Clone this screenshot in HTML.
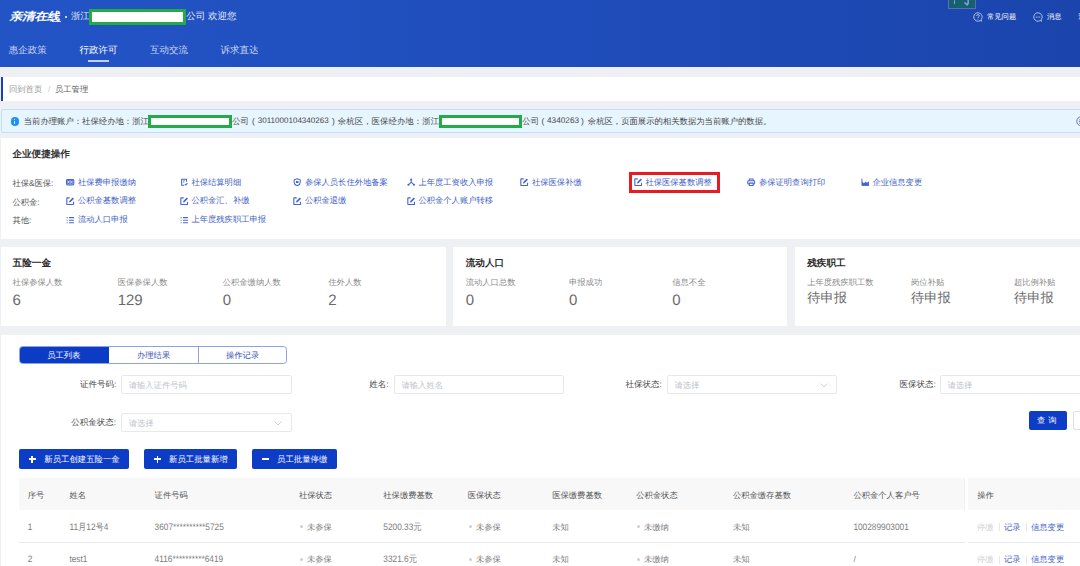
<!DOCTYPE html>
<html><head><meta charset="utf-8">
<style>
*{margin:0;padding:0;box-sizing:border-box}
html,body{width:1080px;height:566px;overflow:hidden;background:#eff0f4;font-family:"Liberation Sans",sans-serif;position:relative;text-rendering:geometricPrecision}
.a{position:absolute;white-space:nowrap;line-height:1}
#hdr{position:absolute;left:0;top:0;width:1080px;height:67px;background:linear-gradient(90deg,#2354c6 0%,#1f4dbb 50%,#1b45ad 100%)}
.w{color:#fff}
.nav{font-size:9.5px;color:rgba(255,255,255,.78);margin-top:1px}
.card{position:absolute;background:#fff}
.at{color:#474747}
.lbl{font-size:8.3px;color:#555}
.lnk{font-size:8.3px;color:#3f5fc6}
.ico{position:absolute;width:9px;height:9px}
.sl{font-size:8.3px;color:#8a8a8a}
.sv{font-size:15px;color:#6a6a6a;font-weight:300}
.st{font-size:9.6px;color:#2a2a2a;font-weight:600}
.inp{position:absolute;height:19px;border:1px solid #e6e8ec;border-radius:2px;background:#fff}
.ph{font-size:8.3px;color:#c0c4cc}
.fl{font-size:8.5px;color:#474747}
.btn{position:absolute;background:#0d3dc7;border-radius:2px;height:19.2px}
.th{font-size:8.3px;color:#555}
.td{font-size:8.3px;color:#7c7c7c}
.dg{transform:scaleY(1.13);transform-origin:0 60%}
</style></head><body>
<div id="hdr">
  <div class="a w" style="left:9px;top:9.6px;font-size:12.8px;font-weight:700;letter-spacing:-0.3px;transform:skewX(-14deg) scaleY(.86);transform-origin:0 100%">亲清在线</div><div class="a" style="left:52px;top:20.5px;width:9px;height:0.8px;background:rgba(255,255,255,.8)"></div>
  <div class="a" style="left:65px;top:16px;width:2.2px;height:2.2px;border-radius:50%;background:#fff"></div>
  <div class="a w" style="left:71px;top:11.8px;font-size:9.3px;opacity:.9">浙江</div>
  <div class="a" style="left:89px;top:9px;width:97px;height:16.4px;border:3px solid #22ab46;background:#fff"></div>
  <div class="a w" style="left:186.3px;top:11.8px;font-size:9.5px;opacity:.9">公司 欢迎您</div>
  <div class="a nav" style="left:8.75px;top:45px">惠企政策</div>
  <div class="a nav" style="left:79.4px;top:45px;color:#fff">行政许可</div>
  <div class="a nav" style="left:150px;top:45px">互动交流</div>
  <div class="a nav" style="left:220.6px;top:45px">诉求直达</div>
  <div class="a" style="left:88px;top:59.8px;width:20.8px;height:2.2px;background:rgba(255,255,255,.72)"></div>
  <div class="a" style="left:947.5px;top:-1px;width:28.5px;height:10px;background:#17616f;border:1px solid #5a6fae"></div><div class="a" style="left:953.5px;top:0;width:1.5px;height:3.5px;background:#8c9ee8;border-radius:1px"></div><svg class="a" style="left:962px;top:0" width="8" height="6" viewBox="0 0 8 6"><path d="M6.2 0V3.2L5.2 4.8 2.5 2.5" fill="none" stroke="#8c9ee8" stroke-width="1.5"/></svg>
  <svg class="a" style="left:972.5px;top:11.5px" width="10" height="10" viewBox="0 0 20 20" fill="none" stroke="rgba(255,255,255,.85)" stroke-width="1.5"><path d="M10 1.5a8.5 8.5 0 1 0 4.5 15.7L17 18.5l-.6-3A8.5 8.5 0 0 0 10 1.5z"/><path d="M7.5 7.8a2.5 2.5 0 1 1 3.5 2.2c-.8.4-1 .9-1 1.6v.6" stroke-width="1.6"/><circle cx="10" cy="14.5" r=".9" fill="#fff" stroke="none"/></svg>
  <div class="a w" style="left:987px;top:12.5px;font-size:7.3px;font-weight:500">常见问题</div>
  <svg class="a" style="left:1032.5px;top:11.5px" width="10" height="10" viewBox="0 0 20 20" fill="none" stroke="rgba(255,255,255,.85)" stroke-width="1.5"><path d="M10 1.5a8.5 8.5 0 1 0 4.5 15.7L17 18.5l-.6-3A8.5 8.5 0 0 0 10 1.5z"/><circle cx="6.5" cy="10" r="1" fill="#fff" stroke="none"/><circle cx="10" cy="10" r="1" fill="#fff" stroke="none"/><circle cx="13.5" cy="10" r="1" fill="#fff" stroke="none"/></svg>
  <div class="a w" style="left:1047px;top:12.5px;font-size:7.3px;font-weight:500">消息</div><div class="a w" style="left:1078.3px;top:12.5px;font-size:7.3px;font-weight:500">退出</div>
</div>

<!-- breadcrumb -->
<div class="card" style="left:1px;top:77px;width:1079px;height:24px">
  <div class="a" style="left:0;top:0;width:2px;height:24px;background:#1a3ec4"></div>
  <div class="a" style="left:8px;top:7.5px;font-size:8.3px;color:#999">回到首页</div>
  <div class="a" style="left:47px;top:7.5px;font-size:8.3px;color:#c8c8c8">/</div>
  <div class="a" style="left:54px;top:7.5px;font-size:8.3px;color:#606060">员工管理</div>
</div>

<!-- alert -->
<div class="a" style="left:1px;top:109px;width:1090px;height:23.5px;background:#e6f5fe;border:1px solid #bfe0f9;border-radius:2px"></div>
<div class="a" style="left:10.5px;top:117px;width:8.5px;height:8.5px;border-radius:50%;background:#1e90f5"></div><div class="a" style="left:14.3px;top:119px;width:1px;height:1px;background:#fff;opacity:.8"></div><div class="a" style="left:14.3px;top:120.5px;width:1px;height:3px;background:#fff;opacity:.8"></div>
<div class="a at" style="left:23.7px;top:116.8px;font-size:8.35px;letter-spacing:0px">当前办理账户：社保经办地：浙江</div>
<div class="a" style="left:148px;top:115px;width:83.5px;height:13px;border:3px solid #22ab46;background:#fff"></div>
<div class="a at" style="left:232.2px;top:116.8px;font-size:8.35px;letter-spacing:0px">公司</div><div class="a at" style="left:249.3px;top:116.8px;width:8px;text-align:center;font-size:8.35px">(</div><div class="a at" style="left:257.8px;top:116.8px;font-size:8.04px;letter-spacing:0px">3011000104340263</div><div class="a at" style="left:329.4px;top:116.8px;width:8px;text-align:center;font-size:8.35px">)</div><div class="a at" style="left:337.8px;top:116.8px;font-size:8.35px;letter-spacing:0.1px">余杭区，医保经办地：浙江</div>
<div class="a" style="left:439.2px;top:115px;width:82.5px;height:13px;border:3px solid #22ab46;background:#fff"></div>
<div class="a at" style="left:522.3px;top:116.8px;font-size:8.35px;letter-spacing:0px">公司</div><div class="a at" style="left:539px;top:116.8px;width:8px;text-align:center;font-size:8.35px">(</div><div class="a at" style="left:547px;top:116.8px;font-size:8.25px;letter-spacing:0px">4340263</div><div class="a at" style="left:578.5px;top:116.8px;width:8px;text-align:center;font-size:8.35px">)</div><div class="a at" style="left:587.8px;top:116.8px;font-size:8.35px;letter-spacing:0px">余杭区，页面展示的相关数据为当前账户的数据。</div>

<svg class="a" style="left:1075.5px;top:116px" width="11" height="11" viewBox="0 0 22 22" fill="none" stroke="#6b72cc" stroke-width="2"><circle cx="10.5" cy="10.5" r="9"/><path d="M6 8h9M6 11h9M6 14h9" stroke-width="1.6"/></svg>
<!-- actions card -->
<div class="card" style="left:1px;top:138px;width:1079px;height:101px"></div>
<div class="a st" style="left:12.4px;top:150px;font-size:9.6px;color:#333">企业便捷操作</div>
<div class="a lbl" style="left:12.4px;top:179px">社保&amp;医保:</div>
<div class="a lbl" style="left:12.4px;top:197.5px">公积金:</div>
<div class="a lbl" style="left:12.4px;top:216px">其他:</div>

<div class="a lnk" style="left:77.9px;top:177.6px">社保费申报缴纳</div>
<div class="a lnk" style="left:191.4px;top:177.6px">社保结算明细</div>
<div class="a lnk" style="left:304.9px;top:177.6px">参保人员长住外地备案</div>
<div class="a lnk" style="left:418.4px;top:177.6px">上年度工资收入申报</div>
<div class="a lnk" style="left:531.9px;top:177.6px">社保医保补缴</div>
<div class="a lnk" style="left:645.4px;top:177.6px">社保医保基数调整</div>
<div class="a lnk" style="left:758.9px;top:177.6px">参保证明查询打印</div>
<div class="a lnk" style="left:872.4px;top:177.6px">企业信息变更</div>
<div class="a" style="left:628.7px;top:171.6px;width:91.1px;height:21.1px;border:3px solid #ea1a22"></div>

<div class="a lnk" style="left:77.9px;top:196.1px">公积金基数调整</div>
<div class="a lnk" style="left:191.4px;top:196.1px">公积金汇、补缴</div>
<div class="a lnk" style="left:304.9px;top:196.1px">公积金退缴</div>
<div class="a lnk" style="left:418.4px;top:196.1px">公积金个人账户转移</div>

<div class="a lnk" style="left:77.9px;top:214.6px">流动人口申报</div>
<div class="a lnk" style="left:191.4px;top:214.6px">上年度残疾职工申报</div>

<svg class="a" style="left:66.4px;top:177.6px" width="8.4" height="8.4" viewBox="0 0 18 18" fill="none" stroke="#4565cc" stroke-width="2.2"><rect x="1.2" y="3.2" width="15.6" height="11.8" rx="2" fill="#b9c7f0"/><rect x="3.8" y="5.6" width="3.6" height="7" fill="#dfe6fa" stroke-width="1.3"/><rect x="10.6" y="5.6" width="3.6" height="7" fill="#dfe6fa" stroke-width="1.3"/></svg>
<svg class="a" style="left:179.9px;top:177.6px" width="8.4" height="8.4" viewBox="0 0 18 18" fill="none" stroke="#4565cc" stroke-width="2.2"><path d="M14 8V2.5H3.5v13H9"/><path d="M6 6h5M6 9h3" stroke-width="1.5"/><path d="M10.5 13l2 2 3.5-4"/></svg>
<svg class="a" style="left:293.4px;top:177.6px" width="8.4" height="8.4" viewBox="0 0 18 18" fill="none" stroke="#4565cc" stroke-width="2.2"><path d="M9 1.5L2.5 4v5c0 4 3 6.5 6.5 7.5 3.5-1 6.5-3.5 6.5-7.5V4z"/><rect x="6.3" y="6.5" width="5.4" height="4.2" fill="#4565cc" stroke="none"/></svg>
<svg class="a" style="left:406.9px;top:177.6px" width="8.4" height="8.4" viewBox="0 0 18 18" fill="none" stroke="#4565cc" stroke-width="2.2"><circle cx="9" cy="3.5" r="2.2" fill="#4565cc" stroke="none"/><circle cx="3" cy="14.5" r="2.2" fill="#4565cc" stroke="none"/><circle cx="15" cy="14.5" r="2.2" fill="#4565cc" stroke="none"/><path d="M9 4v5M9 9l-6 5.5M9 9l6 5.5"/></svg>
<svg class="a" style="left:520.4px;top:177.6px" width="8.4" height="8.4" viewBox="0 0 18 18" fill="none" stroke="#4565cc" stroke-width="2.2"><path d="M8 1.8H2.8a1 1 0 0 0-1 1v12.4a1 1 0 0 0 1 1h12.4a1 1 0 0 0 1-1V10" stroke-width="2.4"/><path d="M6.6 11.6l.5-3 7.4-7.4 2.5 2.5-7.4 7.4z" fill="#4565cc" stroke="none"/></svg>
<svg class="a" style="left:633.9px;top:177.6px" width="8.4" height="8.4" viewBox="0 0 18 18" fill="none" stroke="#4565cc" stroke-width="2.2"><path d="M8 1.8H2.8a1 1 0 0 0-1 1v12.4a1 1 0 0 0 1 1h12.4a1 1 0 0 0 1-1V10" stroke-width="2.4"/><path d="M6.6 11.6l.5-3 7.4-7.4 2.5 2.5-7.4 7.4z" fill="#4565cc" stroke="none"/></svg>
<svg class="a" style="left:747.4px;top:177.6px" width="8.4" height="8.4" viewBox="0 0 18 18" fill="none" stroke="#4565cc" stroke-width="2.2"><path d="M5 6V2h8v4"/><rect x="1.5" y="6" width="15" height="7" rx="2"/><path d="M5 11v5h8v-5z" fill="#fff"/></svg>
<svg class="a" style="left:860.9px;top:177.6px" width="8.4" height="8.4" viewBox="0 0 18 18" fill="none" stroke="#4565cc" stroke-width="2.2"><path d="M2 1.5V16h15" stroke-width="2"/><path d="M2 16V7l4 4 4-3 3 2 4-3v9z" fill="#4565cc" stroke="none"/></svg>
<svg class="a" style="left:66.4px;top:196.6px" width="8.4" height="8.4" viewBox="0 0 18 18" fill="none" stroke="#4565cc" stroke-width="2.2"><path d="M8 1.8H2.8a1 1 0 0 0-1 1v12.4a1 1 0 0 0 1 1h12.4a1 1 0 0 0 1-1V10" stroke-width="2.4"/><path d="M6.6 11.6l.5-3 7.4-7.4 2.5 2.5-7.4 7.4z" fill="#4565cc" stroke="none"/></svg>
<svg class="a" style="left:179.9px;top:196.6px" width="8.4" height="8.4" viewBox="0 0 18 18" fill="none" stroke="#4565cc" stroke-width="2.2"><path d="M8 1.8H2.8a1 1 0 0 0-1 1v12.4a1 1 0 0 0 1 1h12.4a1 1 0 0 0 1-1V10" stroke-width="2.4"/><path d="M6.6 11.6l.5-3 7.4-7.4 2.5 2.5-7.4 7.4z" fill="#4565cc" stroke="none"/></svg>
<svg class="a" style="left:293.4px;top:196.6px" width="8.4" height="8.4" viewBox="0 0 18 18" fill="none" stroke="#4565cc" stroke-width="2.2"><path d="M8 1.8H2.8a1 1 0 0 0-1 1v12.4a1 1 0 0 0 1 1h12.4a1 1 0 0 0 1-1V10" stroke-width="2.4"/><path d="M6.6 11.6l.5-3 7.4-7.4 2.5 2.5-7.4 7.4z" fill="#4565cc" stroke="none"/></svg>
<svg class="a" style="left:406.9px;top:196.6px" width="8.4" height="8.4" viewBox="0 0 18 18" fill="none" stroke="#4565cc" stroke-width="2.2"><path d="M8 1.8H2.8a1 1 0 0 0-1 1v12.4a1 1 0 0 0 1 1h12.4a1 1 0 0 0 1-1V10" stroke-width="2.4"/><path d="M6.6 11.6l.5-3 7.4-7.4 2.5 2.5-7.4 7.4z" fill="#4565cc" stroke="none"/></svg>
<svg class="a" style="left:66.4px;top:215.6px" width="8.4" height="8.4" viewBox="0 0 18 18" fill="none" stroke="#4565cc" stroke-width="2.2"><path d="M6.5 3.5H17M6.5 9H17M6.5 14.5H17"/><path d="M1.5 3.5h2M1.5 9h2M1.5 14.5h2"/></svg>
<svg class="a" style="left:179.9px;top:215.6px" width="8.4" height="8.4" viewBox="0 0 18 18" fill="none" stroke="#4565cc" stroke-width="2.2"><path d="M6.5 3.5H17M6.5 9H17M6.5 14.5H17"/><path d="M1.5 3.5h2M1.5 9h2M1.5 14.5h2"/></svg>
<!-- stat cards -->
<div class="card" style="left:1px;top:247px;width:445px;height:79px"></div>
<div class="card" style="left:453.3px;top:247px;width:334px;height:79px"></div>
<div class="card" style="left:795.3px;top:247px;width:290px;height:79px"></div>

<div class="a st" style="left:12.6px;top:258.5px">五险一金</div>
<div class="a sl" style="left:12.6px;top:278px">社保参保人数</div>
<div class="a sl" style="left:117.7px;top:278px">医保参保人数</div>
<div class="a sl" style="left:222.7px;top:278px">公积金缴纳人数</div>
<div class="a sl" style="left:328.3px;top:278px">住外人数</div>
<div class="a sv" style="left:12.6px;top:293px">6</div>
<div class="a sv" style="left:117.7px;top:293px">129</div>
<div class="a sv" style="left:222.7px;top:293px">0</div>
<div class="a sv" style="left:328.3px;top:293px">2</div>

<div class="a st" style="left:465.7px;top:258.5px">流动人口</div>
<div class="a sl" style="left:465.7px;top:278px">流动人口总数</div>
<div class="a sl" style="left:569px;top:278px">申报成功</div>
<div class="a sl" style="left:672.3px;top:278px">信息不全</div>
<div class="a sv" style="left:465.7px;top:293px">0</div>
<div class="a sv" style="left:569px;top:293px">0</div>
<div class="a sv" style="left:672.3px;top:293px">0</div>

<div class="a st" style="left:807.2px;top:258.5px">残疾职工</div>
<div class="a sl" style="left:807.2px;top:278px">上年度残疾职工数</div>
<div class="a sl" style="left:911px;top:278px">岗位补贴</div>
<div class="a sl" style="left:1013.9px;top:278px">超比例补贴</div>
<div class="a sv" style="left:807.2px;top:290.5px;font-size:13.3px">待申报</div>
<div class="a sv" style="left:911px;top:290.5px;font-size:13.3px">待申报</div>
<div class="a sv" style="left:1013.9px;top:290.5px;font-size:13.3px">待申报</div>

<!-- main card -->
<div class="card" style="left:1px;top:335px;width:1079px;height:240px"></div>
<!-- tabs -->
<div class="a" style="left:18.75px;top:346.3px;width:268.25px;height:17.9px;border:1px solid #8ea2e2;border-radius:3.5px;overflow:hidden;background:#fff">
  <div class="a" style="left:0;top:0;width:89.5px;height:100%;background:#0c3cc6"></div>
  <div class="a" style="left:178.5px;top:0;width:1px;height:100%;background:#8ea2e2"></div>
</div>
<div class="a" style="left:47.2px;top:350.5px;font-size:8.3px;color:#fff">员工列表</div>
<div class="a" style="left:137px;top:350.5px;font-size:8.3px;color:#3c50b4">办理结果</div>
<div class="a" style="left:226px;top:350.5px;font-size:8.3px;color:#3c50b4">操作记录</div>

<!-- form -->
<div class="a fl" style="left:80px;top:380px">证件号码:</div>
<div class="inp" style="left:121.3px;top:375.2px;width:170.4px"></div>
<div class="a ph" style="left:128.7px;top:380.5px">请输入证件号码</div>
<div class="a fl" style="left:369.2px;top:380px">姓名:</div>
<div class="inp" style="left:394.2px;top:375.2px;width:170.2px"></div>
<div class="a ph" style="left:401.5px;top:380.5px">请输入姓名</div>
<div class="a fl" style="left:625.6px;top:380px">社保状态:</div>
<div class="inp" style="left:667.2px;top:375.2px;width:170.3px"></div>
<div class="a ph" style="left:674.5px;top:380.5px">请选择</div><svg class="a" style="left:820px;top:382.5px" width="8" height="5" viewBox="0 0 8 5"><path d="M0.5 0.5L4 4L7.5 0.5" fill="none" stroke="#c0c4cc" stroke-width="0.8"/></svg>
<div class="a fl" style="left:899.4px;top:380px">医保状态:</div>
<div class="inp" style="left:940.2px;top:375.2px;width:170px"></div>
<div class="a ph" style="left:947.5px;top:380.5px">请选择</div>

<div class="a fl" style="left:71.3px;top:418px">公积金状态:</div>
<div class="inp" style="left:121.3px;top:413.4px;width:170.6px"></div>
<div class="a ph" style="left:128.7px;top:418.5px">请选择</div><svg class="a" style="left:274px;top:420.5px" width="8" height="5" viewBox="0 0 8 5"><path d="M0.5 0.5L4 4L7.5 0.5" fill="none" stroke="#c0c4cc" stroke-width="0.8"/></svg>

<div class="btn" style="left:1028.7px;top:410.9px;width:38px"></div>
<div class="a" style="left:1037px;top:416px;font-size:8.3px;color:#fff;font-weight:500;letter-spacing:3px">查询</div>
<div class="a" style="left:1073px;top:410.9px;width:20px;height:19.3px;border:1px solid #dcdfe6;border-radius:2px;background:#fff"></div>

<!-- buttons -->
<div class="btn" style="left:18.7px;top:449.4px;width:110.4px"></div>
<div class="btn" style="left:143.8px;top:449.4px;width:93.5px"></div>
<div class="btn" style="left:251.8px;top:449.4px;width:85px"></div>
<div class="a" style="left:28.7px;top:458.45px;width:7px;height:1.5px;background:#fff"></div><div class="a" style="left:31.45px;top:455.7px;width:1.5px;height:7px;background:#fff"></div>
<div class="a" style="left:44.3px;top:455px;font-size:8.4px;color:#fff">新员工创建五险一金</div>
<div class="a" style="left:153.8px;top:458.45px;width:7px;height:1.5px;background:#fff"></div><div class="a" style="left:156.55px;top:455.7px;width:1.5px;height:7px;background:#fff"></div>
<div class="a" style="left:169px;top:455px;font-size:8.4px;color:#fff">新员工批量新增</div>
<div class="a" style="left:261.8px;top:458.45px;width:7px;height:1.5px;background:#fff"></div>
<div class="a" style="left:277px;top:455px;font-size:8.4px;color:#fff">员工批量停缴</div>

<!-- table -->
<div class="a" style="left:18.5px;top:478.3px;width:1062px;height:32.2px;background:#f8f8f9"></div>
<div class="a" style="left:18.5px;top:542px;width:1062px;height:1px;background:#e9eaee"></div>
<div class="a" style="left:965px;top:478px;width:2.5px;height:33px;background:#fff"></div>
<div class="a" style="left:964px;top:478px;width:1px;height:33px;background:#f1f1f3"></div>
<div class="a" style="left:965px;top:542px;width:2.5px;height:1px;background:#fff"></div>

<div class="a th" style="left:27.8px;top:490.5px">序号</div>
<div class="a th" style="left:69.4px;top:490.5px">姓名</div>
<div class="a th" style="left:154.6px;top:490.5px">证件号码</div>
<div class="a th" style="left:298.9px;top:490.5px">社保状态</div>
<div class="a th" style="left:383.3px;top:490.5px">社保缴费基数</div>
<div class="a th" style="left:467.7px;top:490.5px">医保状态</div>
<div class="a th" style="left:552.2px;top:490.5px">医保缴费基数</div>
<div class="a th" style="left:636.2px;top:490.5px">公积金状态</div>
<div class="a th" style="left:732.9px;top:490.5px">公积金缴存基数</div>
<div class="a th" style="left:853.4px;top:490.5px">公积金个人客户号</div>
<div class="a th" style="left:977.2px;top:490.5px">操作</div>

<div class="a td dg" style="left:27.8px;top:522.5px">1</div>
<div class="a td dg" style="left:69.4px;top:522.5px">11月12号4</div>
<div class="a td dg" style="left:154.6px;top:522.5px">3607**********5725</div>
<div class="a td" style="left:300px;top:522.5px"><span style="display:inline-block;width:3px;height:3px;border-radius:50%;background:#cfcfcf;vertical-align:middle;margin:0 4px 1px 0"></span>未参保</div>
<div class="a td dg" style="left:383.3px;top:522.5px">5200.33元</div>
<div class="a td" style="left:469px;top:522.5px"><span style="display:inline-block;width:3px;height:3px;border-radius:50%;background:#cfcfcf;vertical-align:middle;margin:0 4px 1px 0"></span>未参保</div>
<div class="a td" style="left:552.2px;top:522.5px">未知</div>
<div class="a td" style="left:637px;top:522.5px"><span style="display:inline-block;width:3px;height:3px;border-radius:50%;background:#cfcfcf;vertical-align:middle;margin:0 4px 1px 0"></span>未缴纳</div>
<div class="a td" style="left:732.9px;top:522.5px">未知</div>
<div class="a td dg" style="left:853.4px;top:522.5px">100289903001</div>
<div class="a td" style="left:977px;top:522.5px;color:#cfcfcf">停缴</div><div class="a" style="left:999px;top:523.0px;width:1px;height:8px;background:#e8e8e8"></div><div class="a td" style="left:1004px;top:522.5px;color:#3f5fc6">记录</div><div class="a" style="left:1025.5px;top:523.0px;width:1px;height:8px;background:#e8e8e8"></div><div class="a td" style="left:1031px;top:522.5px;color:#3f5fc6">信息变更</div>

<div class="a td dg" style="left:27.8px;top:555px">2</div>
<div class="a td dg" style="left:69.4px;top:555px">test1</div>
<div class="a td dg" style="left:154.6px;top:555px">4116**********6419</div>
<div class="a td" style="left:300px;top:555px"><span style="display:inline-block;width:3px;height:3px;border-radius:50%;background:#cfcfcf;vertical-align:middle;margin:0 4px 1px 0"></span>未参保</div>
<div class="a td dg" style="left:383.3px;top:555px">3321.6元</div>
<div class="a td" style="left:469px;top:555px"><span style="display:inline-block;width:3px;height:3px;border-radius:50%;background:#cfcfcf;vertical-align:middle;margin:0 4px 1px 0"></span>未参保</div>
<div class="a td" style="left:552.2px;top:555px">未知</div>
<div class="a td" style="left:637px;top:555px"><span style="display:inline-block;width:3px;height:3px;border-radius:50%;background:#cfcfcf;vertical-align:middle;margin:0 4px 1px 0"></span>未缴纳</div>
<div class="a td" style="left:732.9px;top:555px">未知</div>
<div class="a td" style="left:853.4px;top:555px">/</div>
<div class="a td" style="left:977px;top:555px;color:#cfcfcf">停缴</div><div class="a" style="left:999px;top:555.5px;width:1px;height:8px;background:#e8e8e8"></div><div class="a td" style="left:1004px;top:555px;color:#3f5fc6">记录</div><div class="a" style="left:1025.5px;top:555.5px;width:1px;height:8px;background:#e8e8e8"></div><div class="a td" style="left:1031px;top:555px;color:#3f5fc6">信息变更</div>

</body></html>
